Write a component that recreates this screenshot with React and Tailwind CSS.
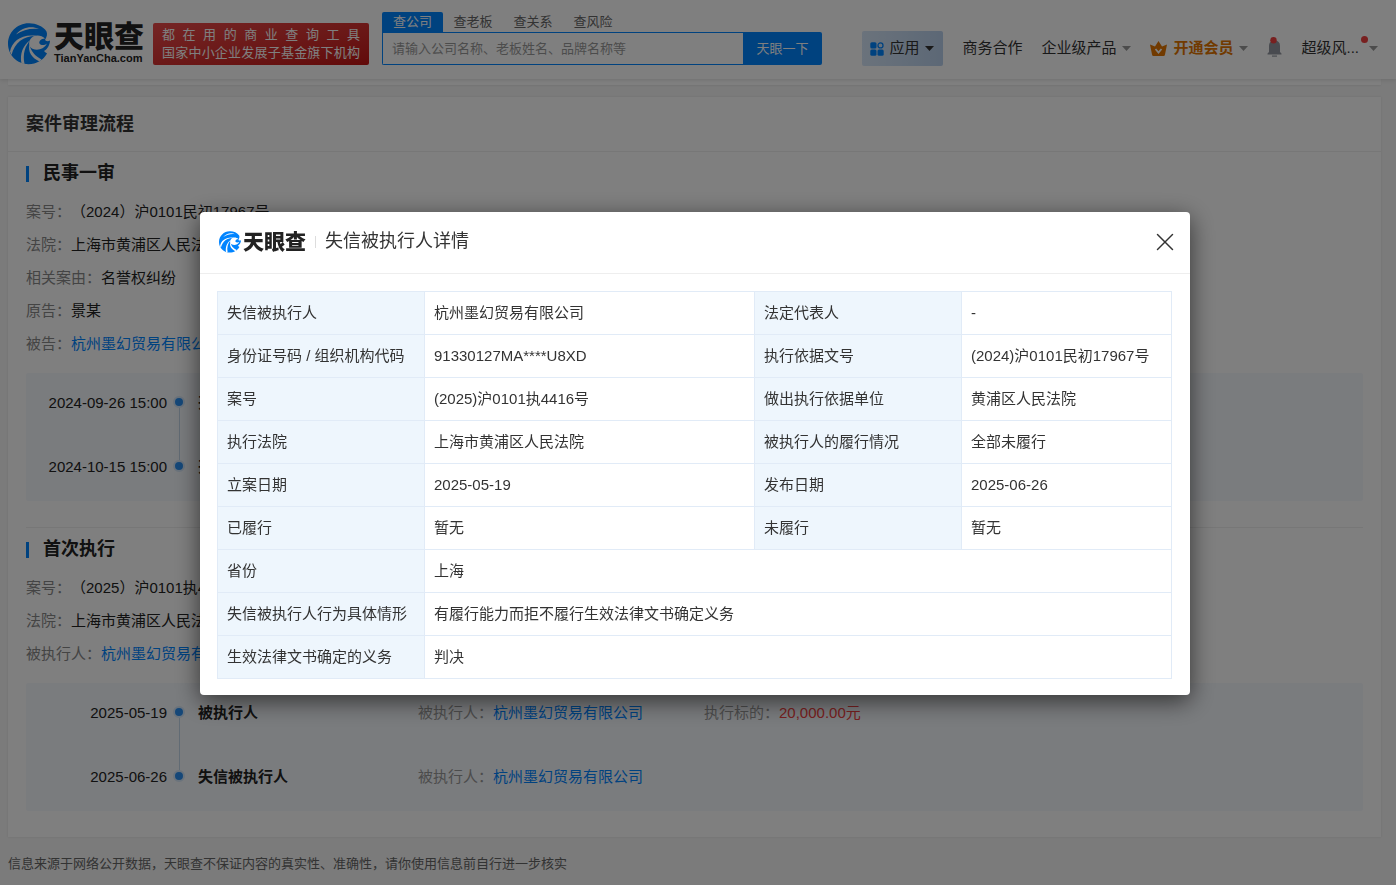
import { LuX } from 'react-icons/lu';

const company = '杭州墨幻贸易有限公司';

const detailRows = [
  ['失信被执行人', company, '法定代表人', '-'],
  ['身份证号码 / 组织机构代码', '91330127MA****U8XD', '执行依据文号', '(2024)沪0101民初17967号'],
  ['案号', '(2025)沪0101执4416号', '做出执行依据单位', '黄浦区人民法院'],
  ['执行法院', '上海市黄浦区人民法院', '被执行人的履行情况', '全部未履行'],
  ['立案日期', '2025-05-19', '发布日期', '2025-06-26'],
  ['已履行', '暂无', '未履行', '暂无'],
  ['省份', '上海'],
  ['失信被执行人行为具体情形', '有履行能力而拒不履行生效法律文书确定义务'],
  ['生效法律文书确定的义务', '判决'],
];

const stages = [
  {
    title: '民事一审',
    info: [
      { label: '案号', value: '（2024）沪0101民初17967号' },
      { label: '法院', value: '上海市黄浦区人民法院' },
      { label: '相关案由', value: '名誉权纠纷' },
      { label: '原告', value: '景某' },
      { label: '被告', value: company, link: true },
    ],
    events: [
      { date: '2024-09-26 15:00', title: '开庭' },
      { date: '2024-10-15 15:00', title: '开庭' },
    ],
  },
  {
    title: '首次执行',
    info: [
      { label: '案号', value: '（2025）沪0101执4416号' },
      { label: '法院', value: '上海市黄浦区人民法院' },
      { label: '被执行人', value: company, link: true },
    ],
    events: [
      { date: '2025-05-19', title: '被执行人', party: company, amount: '20,000.00元' },
      { date: '2025-06-26', title: '失信被执行人', party: company },
    ],
  },
];

const tabs = ['查公司', '查老板', '查关系', '查风险'];

function Swirl({ className }) {
  return (
    <svg viewBox="0 0 42 42" className={className} aria-hidden="true">
      {/* crest and body */}
      <path
        d="M20.500 0.300C27 0 35 3 38.500 8.500C39.500 11 39 13.500 37 17C38.500 18.500 40.500 18.500 42 17.500C41.800 22 39.500 26 36 28C37.500 29.500 38.500 30 39 30.500C35.500 37 28.500 41.200 20.500 41.200C9.200 41.200 0 32 0 20.800S9.200 0.300 20.500 0.300Z"
        fill="#0084ff"
      />
      <path d="M37 15.500C33 11.500 25.500 11.500 22.500 16C20 20 21 24.500 25 26C30 27.800 36 26 39 20.500C36.500 22.500 33 22.500 31.500 20.500C30.500 18.500 33 15.500 37 15.500Z" fill="#fff" />
      <path d="M8 11.500C14 4.500 23 2.500 31 6C23 5 15 6.500 8 11.500Z" fill="#fff" />
      <path d="M29 13C16 12.500 7 19 3.500 32L2 28.500C4 18 14 10.500 29 13Z" fill="#fff" />
      <path d="M22.500 17C17 23 14.500 31 16.500 41L13.500 40.500C11.500 31 15 22 22.500 17Z" fill="#fff" />
      <path d="M21.500 21C22.500 28 27 33 33.500 36.500L31.500 38.500C24 35 19.500 29 21.500 21Z" fill="#fff" />
    </svg>
  );
}

function Caret({ className }) {
  return (
    <svg viewBox="0 0 9 5" className={`h-[5px] w-[9px] ${className}`} aria-hidden="true">
      <path d="M0 0h9L4.500 5z" fill="currentColor" />
    </svg>
  );
}

function Header() {
  return (
    <header className="relative z-10 flex h-[79px] items-start bg-white pr-[18px] pl-2 shadow-[0_1px_4px_rgba(0,0,0,0.12)]">
      <a href="#" className="mt-[23px] flex shrink-0 items-center">
        <Swirl className="size-[42px]" />
        <span className="ml-1 flex w-[90px] flex-col text-[#222]">
          <span className="text-[30px] leading-[28px] font-black">天眼查</span>
          <span className="text-[11px] leading-[14px] font-bold">TianYanCha.com</span>
        </span>
      </a>
      <div className="mt-[23px] ml-[9px] h-[42px] w-[216px] shrink-0 rounded-xs bg-linear-to-br from-[#ea4a4a] to-[#c41313] px-[9px] pt-[3px] text-[13px] leading-[18px] text-white">
        <p className="[text-align-last:justify]">都 在 用 的 商 业 查 询 工 具</p>
        <p className="[text-align-last:justify]">国家中小企业发展子基金旗下机构</p>
      </div>
      <form className="mt-3 ml-[13px] w-[440px] shrink-0 text-[13px]">
        <div className="flex h-5">
          {tabs.map((tab, i) => (
            <button
              key={tab}
              type="button"
              className={i === 0 ? 'w-[61px] rounded-t-xs bg-[#0084ff] text-white' : 'w-[60px] text-[#666]'}
            >
              {tab}
            </button>
          ))}
        </div>
        <div className="flex h-[33px]">
          <input
            type="text"
            aria-label="搜索"
            placeholder="请输入公司名称、老板姓名、品牌名称等"
            className="min-w-0 flex-1 rounded-bl-xs border border-r-0 border-[#0084ff] px-[9px] placeholder:text-[#999]"
          />
          <button type="button" className="w-[79px] rounded-r-xs bg-[#0084ff] text-white">天眼一下</button>
        </div>
      </form>
      <nav className="mt-[31px] ml-auto flex h-[35px] shrink-0 items-center gap-[19px] text-[15px] text-[#333]">
        <button type="button" className="flex h-[35px] w-[81px] items-center rounded-xs bg-linear-to-r from-[#d6e6f8] to-[#b9d0ec] pl-2">
          <svg viewBox="0 0 14 14" className="mr-[5px] size-[14px]" aria-hidden="true">
            <rect x="0.300" y="0.300" width="6.200" height="6.200" rx="1.500" fill="#0084ff" />
            <circle cx="10.500" cy="3.400" r="2.500" fill="none" stroke="#0084ff" strokeWidth="1.300" />
            <rect x="0.300" y="7.500" width="6.200" height="6.200" rx="1.500" fill="#0084ff" />
            <rect x="7.500" y="7.500" width="6.200" height="6.200" rx="1.500" fill="#0084ff" />
          </svg>
          应用
          <Caret className="ml-[6px] text-[#333]" />
        </button>
        <a href="#">商务合作</a>
        <a href="#" className="flex items-center gap-[6px]">
          企业级产品
          <Caret className="text-[#999]" />
        </a>
        <a href="#" className="flex items-center gap-[6px] font-bold text-[#e27500]">
          <svg viewBox="0 0 17 15" className="h-[15px] w-[17px]" aria-hidden="true">
            <path d="M0 3.500L5 5.500L8.500 0L12 5.500L17 3.500L15 13.500Q14.800 15 13.500 15H3.500Q2.200 15 2 13.500Z" fill="#e27500" />
            <path d="M5.500 8L8.500 11.500L11.500 8" fill="none" stroke="#fff" strokeWidth="1.800" />
          </svg>
          开通会员
          <Caret className="text-[#999]" />
        </a>
        <button type="button" aria-label="消息">
          <svg viewBox="0 0 15 20" className="mb-1 h-5 w-[15px]" aria-hidden="true">
            <path d="M0.500 17.500V16.500L2 15V9Q2 3.500 7.500 3.500Q13 3.500 13 9V15L14.500 16.500V17.500Z" fill="#9297a0" />
            <rect x="5" y="18.500" width="5" height="1.200" fill="#9297a0" />
            <circle cx="6.500" cy="3.300" r="3.200" fill="#f04040" />
          </svg>
        </button>
        <a href="#" className="relative flex items-center gap-[10px]">
          超级风...
          <span className="absolute -top-[1px] right-[10px] size-[7px] rounded-full bg-[#f04040]" />
          <Caret className="text-[#999]" />
        </a>
      </nav>
    </header>
  );
}

function Timeline({ events }) {
  return (
    <ul className="mt-[13px] rounded-xs bg-[#f5f8fc] pt-[18px] leading-6">
      {events.map((event, i) => (
        <li key={event.date} className="flex h-16 last:h-[46px]">
          <time className="w-[141px] text-right text-[#222]">{event.date}</time>
          <span className="flex w-6 flex-col items-center pt-[5px]">
            <span className="size-3 shrink-0 rounded-full border-2 border-[#d5e6f8] bg-[#2a8ff0]" />
            {i < events.length - 1 && <span className="-mb-[5px] w-px flex-1 bg-[#c3d6e8]" />}
          </span>
          <strong className="ml-[7px] w-[220px] font-bold text-[#222]">{event.title}</strong>
          {event.party && (
            <span className="w-[286px] text-[#999]">
              被执行人：<a href="#" className="text-[#0084ff]">{event.party}</a>
            </span>
          )}
          {event.amount && (
            <span className="text-[#999]">
              执行标的：<span className="text-[#f04040]">{event.amount}</span>
            </span>
          )}
        </li>
      ))}
    </ul>
  );
}

function Stage({ stage }) {
  return (
    <section className="mx-[18px] border-b border-[#eee] pb-[26px] last:border-b-0">
      <h3 className="flex h-[43px] items-center text-[18px] font-bold text-[#222]">
        <span className="mr-[14px] h-4 w-[3px] bg-[#0084ff]" />
        {stage.title}
      </h3>
      {stage.info.map((item) => (
        <p key={item.label} className="leading-[33px] text-[#222] [text-spacing-trim:space-all]">
          <span className="text-[#888]">{item.label}：</span>
          {item.link ? <a href="#" className="text-[#0084ff]">{item.value}</a> : item.value}
        </p>
      ))}
      <Timeline events={stage.events} />
    </section>
  );
}

function DetailDialog() {
  return (
    <div className="fixed inset-0 z-20 flex items-start justify-center bg-black/50 pt-[212px] pr-[6px]">
      <div role="dialog" aria-labelledby="detail-title" className="w-[990px] rounded bg-white shadow-[0_6px_24px_rgba(0,0,0,0.6)]">
        <div className="flex h-[62px] items-center border-b border-[#eee] pr-[17px] pb-[2px] pl-[19px]">
          <Swirl className="size-[22px]" />
          <span className="ml-[2px] text-[21px] font-black text-[#222]">天眼查</span>
          <span className="mx-[9px] h-3 w-px bg-[#ddd]" />
          <h2 id="detail-title" className="text-[18px] text-[#333]">失信被执行人详情</h2>
          <button type="button" aria-label="关闭" className="-mr-[7px] ml-auto">
            <LuX className="size-[30px] text-[#333]" strokeWidth={1.2} />
          </button>
        </div>
        <div className="pt-[17px] pr-[18px] pb-4 pl-[17px]">
          <table className="w-full table-fixed border-collapse text-[#333]">
            <colgroup>
              <col className="w-[207px]" />
              <col />
              <col className="w-[207px]" />
              <col className="w-[210px]" />
            </colgroup>
            <tbody>
              {detailRows.map((row) => (
                <tr key={row[0]} className="h-[43px]">
                  {row.map((cell, i) =>
                    i % 2 === 0 ? (
                      <th key={i} scope="row" className="border border-[#e1ebf7] bg-[#eef6fd] px-[9px] text-left font-normal whitespace-nowrap">
                        {cell}
                      </th>
                    ) : (
                      <td key={i} colSpan={row.length === 2 ? 3 : 1} className="border border-[#e1ebf7] px-[9px] whitespace-nowrap">
                        {cell}
                      </td>
                    )
                  )}
                </tr>
              ))}
            </tbody>
          </table>
        </div>
      </div>
    </div>
  );
}

export default function App() {
  return (
    <div className="min-h-screen bg-[#f6f6f6] font-['Liberation_Sans','Noto_Sans_CJK_SC',sans-serif] text-[15px]">
      <Header />
      <main className="mr-[15px] ml-2">
        <div className="h-[6px] bg-white shadow-[0_1px_2px_rgba(0,0,0,0.06)]" />
        <div className="mt-3 bg-white shadow-[0_0_2px_rgba(0,0,0,0.1)]">
          <h2 className="flex h-[55px] items-center border-b border-[#eee] px-[18px] text-[18px] font-bold text-[#333]">
            案件审理流程
          </h2>
          {stages.map((stage) => (
            <Stage key={stage.title} stage={stage} />
          ))}
        </div>
        <p className="py-[17px] text-[13px] leading-5 text-[#666]">
          信息来源于网络公开数据，天眼查不保证内容的真实性、准确性，请你使用信息前自行进一步核实
        </p>
      </main>
      <DetailDialog />
    </div>
  );
}
